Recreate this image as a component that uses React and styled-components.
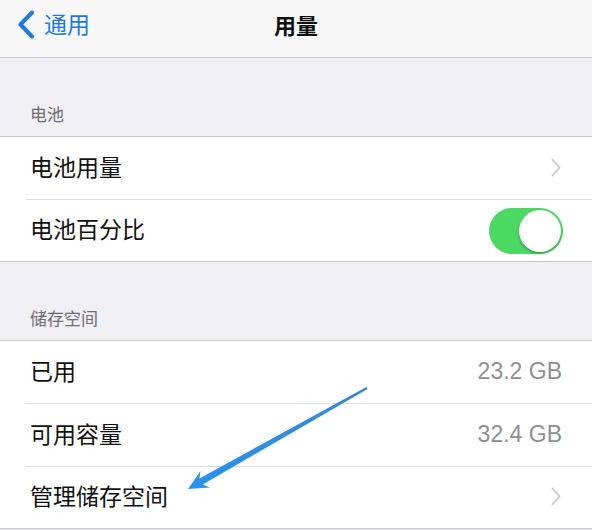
import React from 'react';
import styled, { createGlobalStyle } from 'styled-components';

const GlobalStyle = createGlobalStyle`
  html, body {
    margin: 0;
    padding: 0;
    background: #efeff4;
    font-family: "Noto Sans CJK SC", "Liberation Sans", sans-serif;
  }
`;

export default function App() {
  return (
    <Page>
      <GlobalStyle />
      <NavBar>
        <BackButton>
          <svg width="18" height="29" viewBox="0 0 18 29">
            <path d="M15 2.5 L3.5 14.5 L15 26.5" fill="none" stroke="#1b7be2" strokeWidth="4" strokeLinecap="round" strokeLinejoin="round" />
          </svg>
          <BackLabel>通用</BackLabel>
        </BackButton>
        <Title>用量</Title>
      </NavBar>

      <SectionHeader>电池</SectionHeader>
      <Group>
        <Row>
          <Label>电池用量</Label>
          <Chevron />
        </Row>
        <Row>
          <Label>电池百分比</Label>
          <Switch on>
            <Knob />
          </Switch>
        </Row>
      </Group>

      <SectionHeader>储存空间</SectionHeader>
      <Group>
        <Row>
          <Label>已用</Label>
          <Value>23.2 GB</Value>
        </Row>
        <Row>
          <Label>可用容量</Label>
          <Value>32.4 GB</Value>
        </Row>
        <Row>
          <Label>管理储存空间</Label>
          <Chevron />
        </Row>
      </Group>

      {/* 주석 화살표 */}
      <Arrow width="592" height="530" viewBox="0 0 592 530">
        <defs>
          <linearGradient id="arrowFill" x1="1" y1="0" x2="0" y2="1">
            <stop offset="0" stopColor="#3a86cf" />
            <stop offset="1" stopColor="#2a93ee" />
          </linearGradient>
        </defs>
        <path
          d="M188 489 L210 487.5 L202.8 484.4 L367.6 388.9 L366.4 386.9 L199.4 478.6 L200.5 471 Z"
          fill="url(#arrowFill)"
        />
      </Arrow>
    </Page>
  );
}

function Chevron() {
  return (
    <ChevronIcon width="10" height="19" viewBox="0 0 10 19">
      <path d="M1.5 1.5 L8.5 9.5 L1.5 17.5" fill="none" stroke="#c7c7cc" strokeWidth="1.8" strokeLinecap="round" strokeLinejoin="round" />
    </ChevronIcon>
  );
}

const Page = styled.div`
  position: relative;
  width: 592px;
  height: 530px;
  overflow: hidden;
  background: #efeff4;
`;

// 상단 바
const NavBar = styled.div`
  position: relative;
  height: 57px;
  display: flex;
  align-items: center;
  justify-content: center;
  background: #f7f7f7;
  border-bottom: 1px solid #c8c7cc;
`;

const BackButton = styled.div`
  position: absolute;
  left: 17px;
  top: 10px;
  display: flex;
  align-items: center;
  gap: 9px;
`;

const BackLabel = styled.span`
  font-size: 23px;
  line-height: 30px;
  color: #1b7be2;
  margin-top: -3px;
`;

const Title = styled.span`
  font-size: 22px;
  font-weight: 700;
  color: #111;
  margin-top: -10px;
`;

const SectionHeader = styled.div`
  height: 78px;
  box-sizing: border-box;
  padding: 0 0 10px 30px;
  display: flex;
  align-items: flex-end;
  font-size: 17px;
  color: #6d6d72;
`;

const Group = styled.div`
  background: #fff;
  border-top: 1px solid #c8c7cc;
  border-bottom: 1px solid #c8c7cc;
`;

const Row = styled.div`
  height: 62px;
  display: flex;
  align-items: center;
  justify-content: space-between;
  padding: 0 30px;

  & + & {
    border-top: 1px solid #e0e0e4;
    margin-left: 25px;
    padding-left: 5px;
  }

  &:last-child {
    height: 61px;
  }
`;

const Label = styled.span`
  font-size: 23px;
  color: #111;
  margin-top: -5px;
`;

const Value = styled.span`
  font-family: "Liberation Sans", Arial, sans-serif;
  font-size: 23px;
  color: #8e8e93;
  margin-top: -2px;
`;

const ChevronIcon = styled.svg`
  margin-right: 1px;
  margin-top: -2px;
`;

const Switch = styled.div`
  width: 74px;
  height: 46px;
  border-radius: 23px;
  background: ${(p) => (p.on ? '#4cd964' : '#e5e5ea')};
  position: relative;
  margin-right: -1px;
`;

const Knob = styled.div`
  position: absolute;
  right: 2px;
  top: 2px;
  width: 42px;
  height: 42px;
  border-radius: 50%;
  background: #fff;
  box-shadow: 0 2px 3px rgba(0, 0, 0, 0.25);
`;

const Arrow = styled.svg`
  position: absolute;
  left: 0;
  top: 0;
  pointer-events: none;
`;
